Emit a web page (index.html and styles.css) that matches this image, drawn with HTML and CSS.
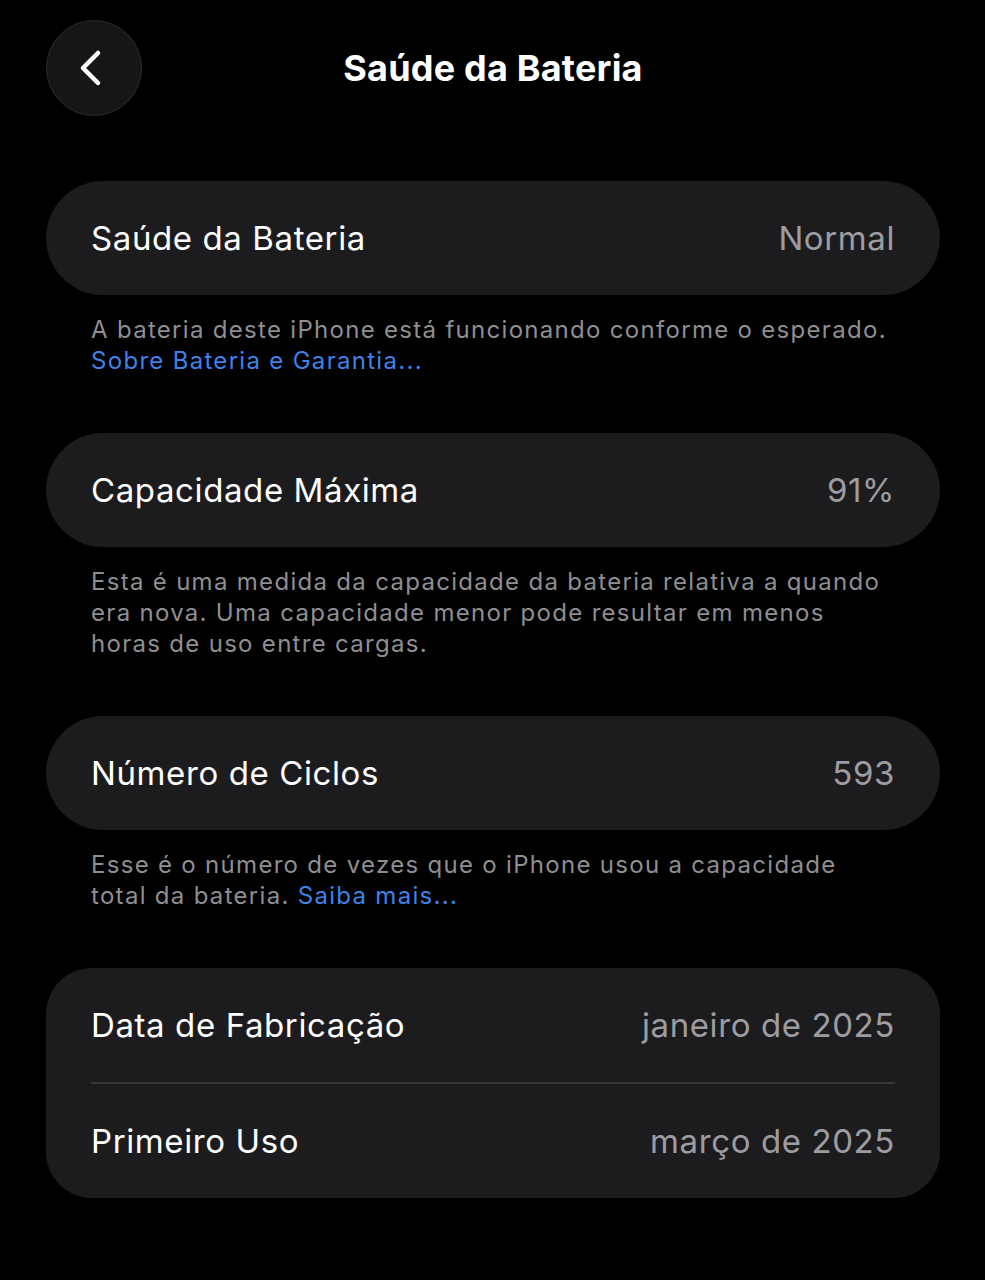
FILE: index.html
```html
<!DOCTYPE html>
<html lang="pt-BR">
<head>
<meta charset="utf-8">
<title>Saúde da Bateria</title>
<link rel="stylesheet" href="styles.css">
</head>
<body>
<div class="screen">
  <header class="nav">
    <button class="back" aria-label="Voltar">
      <svg width="30" height="40" viewBox="0 0 30 40"><path d="M23 5 L8 20 L23 35" fill="none" stroke="#fff" stroke-width="4.5" stroke-linecap="round" stroke-linejoin="round"/></svg>
    </button>
    <h1 class="title">Saúde da Bateria</h1>
  </header>

  <section class="group">
    <div class="card">
      <div class="row"><span class="label">Saúde da Bateria</span><span class="value">Normal</span></div>
    </div>
    <p class="footer">A bateria deste iPhone está funcionando conforme o esperado. <a class="link">Sobre Bateria e Garantia...</a></p>
  </section>

  <section class="group">
    <div class="card">
      <div class="row"><span class="label">Capacidade Máxima</span><span class="value">91%</span></div>
    </div>
    <p class="footer">Esta é uma medida da capacidade da bateria relativa a quando era nova. Uma capacidade menor pode resultar em menos horas de uso entre cargas.</p>
  </section>

  <section class="group">
    <div class="card">
      <div class="row"><span class="label">Número de Ciclos</span><span class="value">593</span></div>
    </div>
    <p class="footer">Esse é o número de vezes que o iPhone usou a capacidade total da bateria. <a class="link">Saiba mais...</a></p>
  </section>

  <section class="group">
    <div class="card card-multi">
      <div class="row"><span class="label">Data de Fabricação</span><span class="value">janeiro de 2025</span></div>
      <div class="divider"></div>
      <div class="row"><span class="label">Primeiro Uso</span><span class="value">março de 2025</span></div>
    </div>
  </section>
</div>
</body>
</html>
```

FILE: styles.css
```css
html, body {
  margin: 0;
  padding: 0;
  background: #000;
}
body {
  font-family: Inter, "Noto Sans", "Liberation Sans", sans-serif;
  color: #fff;
  -webkit-font-smoothing: antialiased;
}
.screen {
  width: 985px;
  min-height: 1280px;
  box-sizing: border-box;
  padding: 20px 45px 0 46px;
}
.nav {
  position: relative;
  height: 96px;
  display: flex;
  align-items: center;
  justify-content: center;
  margin-bottom: 65px;
}
.back {
  position: absolute;
  left: 0;
  top: 0;
  width: 96px;
  height: 96px;
  border-radius: 50%;
  background: #161617;
  border: 1.5px solid #2c2c2e;
  display: flex;
  align-items: center;
  justify-content: center;
  padding: 0 8px 0 0;
  box-sizing: border-box;
}
.title {
  margin: 0;
  font-size: 36px;
  font-weight: 700;
  letter-spacing: 0.2px;
  margin-left: 0;
}
.group {
  margin-bottom: 57px;
}
.card {
  background: #1c1c1e;
  border-radius: 57px;
  padding: 0 45px;
}
.card-multi {
  border-radius: 46px;
}
.row {
  height: 114px;
  display: flex;
  align-items: center;
  justify-content: space-between;
  font-size: 33px;
  letter-spacing: 0.6px;
}
.label {
  color: #fff;
}
.value {
  color: #9c9ca1;
}
.divider {
  height: 2px;
  background: #38383a;
}
.footer {
  margin: 0;
  padding: 19px 40px 0 45px;
  font-size: 24px;
  line-height: 31px;
  color: #8e8e93;
  letter-spacing: 1.3px;
}
.link {
  color: #3e82ea;
}
```
